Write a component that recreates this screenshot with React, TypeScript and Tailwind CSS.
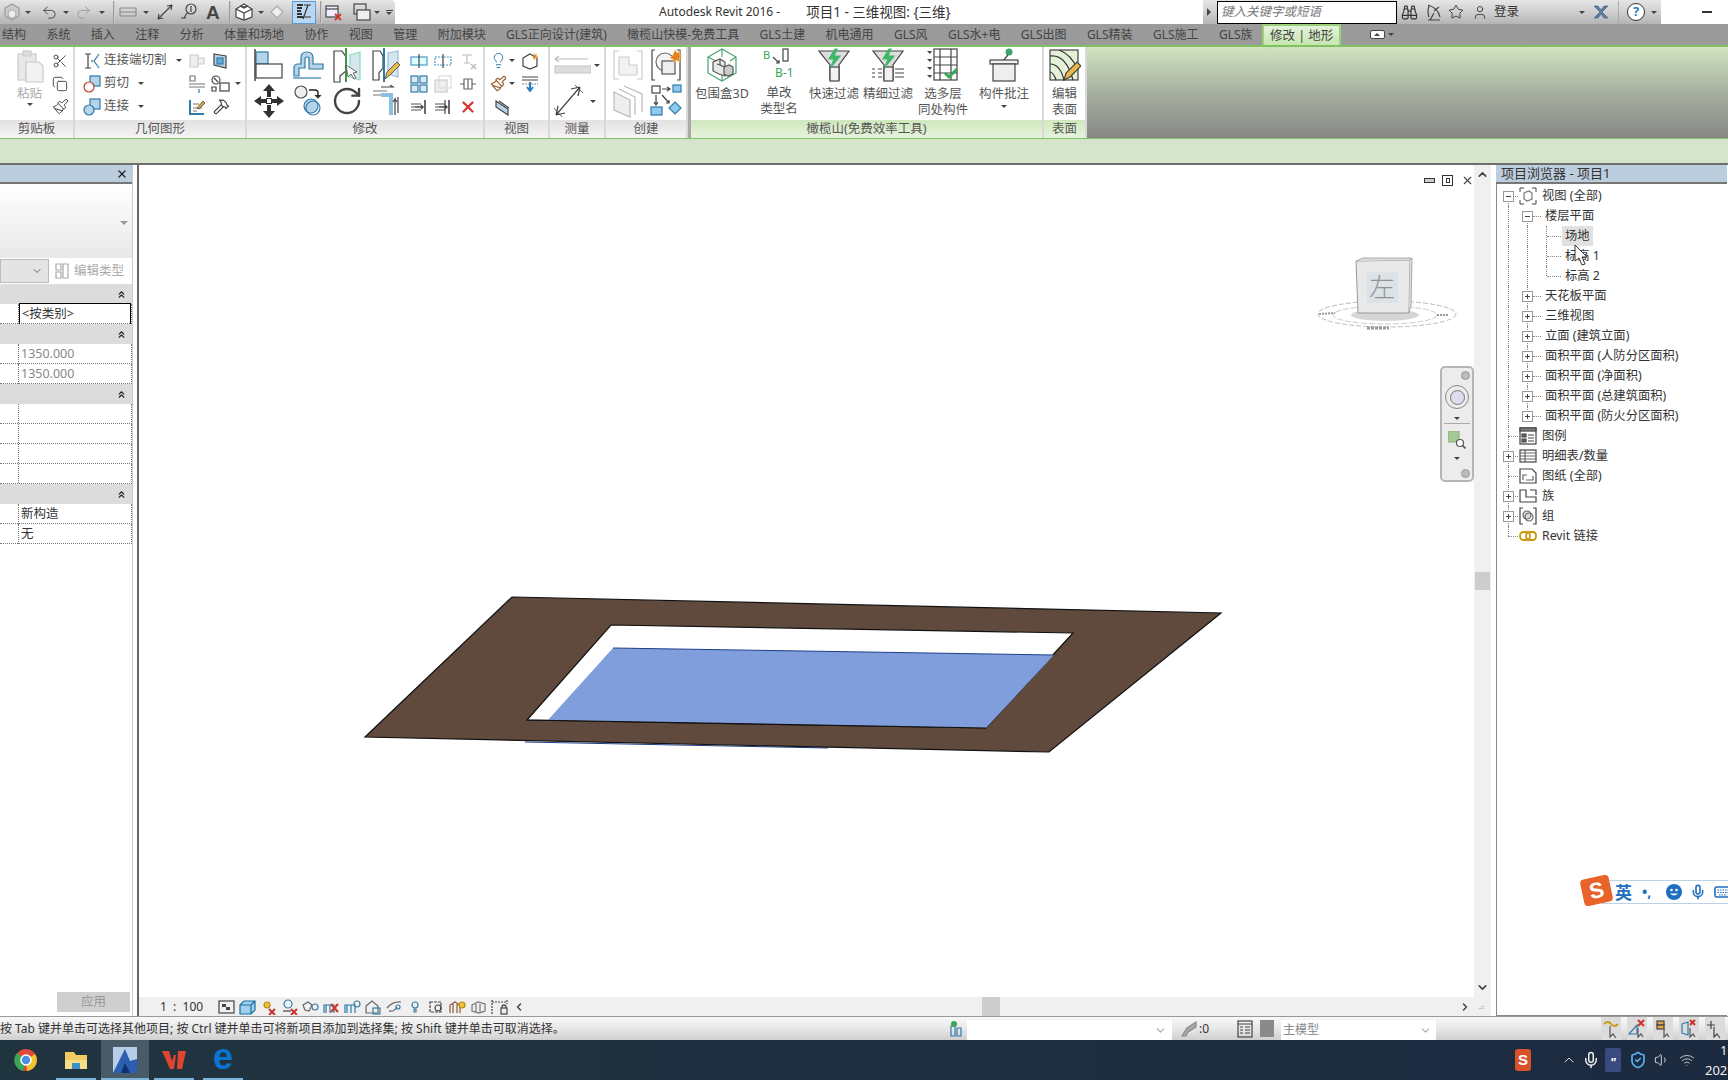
import React from 'react';
import { Undo2, Redo2, Scissors, Copy, Lightbulb, RotateCw, X, Binoculars, Star, User, Hammer, Paintbrush, ChevronLeft, ChevronRight, ChevronUp, ChevronDown, ChevronsUp, Mic, Wifi, Volume1, ShieldCheck } from 'lucide-react';

// small helpers
const Caret = () => <span className="inline-block w-0 h-0 border-x-[3px] border-x-transparent border-t-[3px] border-t-[#444]" />;
const Sep = () => <span className="block w-[2px] h-[22px] bg-[#9a9a9a] border-r border-white/50" />;

const S = ({ w = 24, h = 24, v, children }: { w?: number; h?: number; v?: string; children: React.ReactNode }) => (
  <svg width={w} height={h} viewBox={v || `0 0 ${w} ${h}`} fill="none" stroke="#444" strokeWidth="1.2">{children}</svg>
);

const blue = '#b5d4ea';
const edge = '#2f7ba8';

// ---- ribbon drawings ----
const Clipboard = () => (
  <S w={28} h={34}><rect x="2" y="4" width="18" height="26" fill="#e8e8e8" stroke="#ccc" /><rect x="7" y="1" width="8" height="5" fill="#ddd" stroke="#ccc" /><path d="M10 12h13l4 4v16H10z" fill="#f2f2f2" stroke="#c8c8c8" /></S>
);
const TrimEnd = () => (
  <S w={18} h={18}><path d="M2 2h6M5 2v14M2 16h6" /><path d="M16 2l-5 7 5 7" stroke="#2f7ba8" /><path d="M8 9h3" strokeDasharray="2 1" /></S>
);
const CutGeo = () => (
  <S w={18} h={18}><rect x="7" y="1" width="10" height="10" fill={blue} stroke={edge} /><circle cx="6" cy="12" r="5" fill="#fff" stroke="#c0392b" /></S>
);
const JoinGeo = () => (
  <S w={18} h={18}><rect x="7" y="1" width="10" height="10" fill={blue} stroke={edge} /><circle cx="6" cy="12" r="5" fill={blue} stroke={edge} /></S>
);
const FaintBox = () => (
  <S w={18} h={18}><path d="M2 3h8v12H2zM10 6h6v6h-6z" fill="#eee" stroke="#ccc" /></S>
);
const WallOpen = () => (
  <S w={18} h={18}><path d="M2 2l12 2v12L2 13z" fill={blue} stroke="#444" /><rect x="5" y="6" width="6" height="6" fill="#6aa9d4" stroke={edge} /></S>
);
const Splits = () => (
  <S w={20} h={20}><path d="M3 2h5v5H3zM2 10h16M2 13h16" stroke="#777" /><path d="M12 15v4" stroke={edge} /></S>
);
const Shapes = () => (
  <S w={22} h={18}><circle cx="6" cy="5" r="4" /><path d="M4 3l4 4M2 12h4v4H2z" /><rect x="10" y="8" width="9" height="8" /></S>
);
const Coping = () => (
  <S w={18} h={18}><path d="M2 2v14h14" stroke={edge} strokeWidth="2" /><path d="M5 6h6M5 10h9M5 13h4" stroke="#777" /><path d="M9 10l6-7 2 2-6 6z" fill="#e5a23c" stroke="#444" strokeWidth=".8" /></S>
);
const AlignIcon = () => (
  <S w={30} h={36}><rect x="2" y="5" width="12" height="12" fill={blue} stroke={edge} /><rect x="2" y="17" width="26" height="14" fill="#fff" stroke="#444" /><path d="M1 2v32" strokeWidth="1.5" /></S>
);
const OffsetIcon = () => (
  <S w={32} h={30}><path d="M2 26V18q0-4 4-4h3V8q0-6 6-6t6 6v6h10v5H17V9q0-2-2-2t-2 2v9H7v8z" fill={blue} stroke={edge} /><path d="M1 28h28" stroke={edge} /></S>
);
const MirrorPick = () => (
  <S w={30} h={36}><path d="M2 4h8l4 6v14l-6 5v6H2z" fill="#fff" /><path d="M14 1v34" stroke="#3a9a46" strokeWidth="2" /><path d="M18 8l10-3v28l-10-3z" fill="#d5e6ef" stroke="#8db" /><path d="M14 18l2 12 3-3 3 5 2-1-3-5 4-1z" fill="#fff" stroke="#444" strokeWidth=".8" /></S>
);
const MirrorDraw = () => (
  <S w={30} h={36}><path d="M2 4h7l3 5v12l-4 5v7H2z" fill="#fff" /><path d="M13 1v34" stroke="#2f7ba8" strokeWidth="2" /><path d="M17 6l10-2v26l-10-3z" fill="#d5e6ef" stroke="#9bd" /><path d="M14 32l2-7 10-10 3 3-10 10z" fill="#e8b84a" stroke="#444" strokeWidth=".8" /></S>
);
const MoveIcon = () => (
  <svg width="30" height="34" viewBox="0 0 30 34" fill="#333"><path d="M15 0l6 7h-4v6h-4V7H9zM15 34l-6-7h4v-6h4v6h4zM0 17l7-5v3h5v4H7v3zM30 17l-7 5v-3h-5v-4h5v-3z" /><rect x="12.5" y="14.5" width="5" height="5" fill="#fff" stroke="#333" /></svg>
);
const CopyMove = () => (
  <S w={28} h={32}><circle cx="7" cy="7" r="6" fill="#eee" stroke="#555" /><path d="M15 5h6q3 0 3 3v3" strokeWidth="1.4" stroke="#222" /><path d="M21 10l3 3 3-3" fill="#222" /><circle cx="17" cy="21" r="7" fill={blue} stroke={edge} /><circle cx="19" cy="23" r="7" stroke={edge} /></S>
);
const TrimIcon = () => (
  <S w={30} h={32}><path d="M2 6h14M2 10h14" stroke="#777" /><path d="M10 10h10v20" stroke="#8cc0e0" strokeWidth="4" /><path d="M24 30V14l-2 3m2-3l2 3M10 2h12l-3-2" /><path d="M27 28V12" /></S>
);
const SplitSmall = ({ dot }: { dot?: boolean }) => (
  <S w={20} h={14}><rect x="2" y="3" width="16" height="8" stroke="#4a9cc9" strokeDasharray={dot ? '2 1' : undefined} fill={dot ? 'none' : '#dff'} /><path d="M10 0v14" stroke="#444" /></S>
);
const FaintPin = () => (
  <S w={18} h={18}><path d="M3 3h10M8 3v8M5 11h6" stroke="#bbb" /><path d="M12 12l5 5m0-5l-5 5" stroke="#bbb" strokeWidth="1.5" /></S>
);
const Array4 = () => (
  <S w={18} h={18}>{[1, 10].map(x => [1, 10].map(y => <rect key={x + '-' + y} x={x} y={y} width="7" height="7" fill="#d7ebf6" stroke={edge} />))}</S>
);
const Scale = () => (
  <S w={18} h={18}><rect x="1" y="5" width="12" height="12" fill="#eee" stroke="#ccc" /><rect x="5" y="1" width="12" height="12" stroke="#ddd" /></S>
);
const Pin = () => (
  <S w={18} h={14}><path d="M1 7h4M13 7h4M5 2h8v10H5zM9 2v10" stroke="#666" /></S>
);
const Lines = ({ n = 2 }: { n?: number }) => (
  <S w={18} h={16}><path d="M15 1v14" strokeWidth="1.6" />{n > 2 && <path d="M11 1v14" strokeWidth="1.2" />}<path d="M1 5h10M1 8h11M1 11h10" stroke="#555" /><path d="M5 8h8l-2-2m2 2l-2 2" /></S>
);
const EditCut = () => (
  <S w={20} h={16}><path d="M2 1h16M2 4h16" stroke="#444" /><path d="M2 8h16" strokeDasharray="2 1" stroke="#888" /><path d="M10 6v8m-3-3l3 4 3-4" stroke="#2a7fc1" strokeWidth="2" /></S>
);
const Section = () => (
  <S w={18} h={18}><path d="M2 3l12 8v6L2 9z" fill={blue} stroke="#444" /><path d="M5 3l10 7" stroke="#444" /></S>
);
const Dim = () => (
  <S w={38} h={22}><path d="M2 5h33M2 5l4-3M2 5l4 3" stroke="#bbb" /><rect x="2" y="12" width="36" height="7" fill="#ddd" stroke="#ccc" /></S>
);
const DimD = () => (
  <S w={30} h={34}><path d="M3 31L27 3M3 31l2-9M3 31l9-2M27 3l-2 9M27 3l-9 2" strokeWidth="1.2" /><path d="M1 24l8 9M22 1l8 8" strokeWidth=".8" /></S>
);
const CompBox = () => (
  <S w={32} h={32}><path d="M2 2h5M2 2v28h5M30 2h-5M30 2v28h-5" stroke="#ccc" /><path d="M7 8h10v8h8v10H7z" fill="#f2f2f2" stroke="#ccc" /></S>
);
const InPlace = () => (
  <S w={32} h={34}><path d="M5 2H2v30h3M27 2h3v30h-3" strokeWidth="1.2" /><circle cx="15" cy="14" r="9" stroke="#666" fill="#f5f5f5" /><rect x="12" y="13" width="13" height="13" fill="#eee" stroke="#555" /><path d="M25 2l2 3 3-2-1 4 3 1-3 2 1 4-4-2-2 3-1-4-3-1 3-3z" fill="#e67e22" stroke="#e9c46a" strokeWidth=".8" /></S>
);
const Stack = () => (
  <S w={30} h={34}><path d="M1 8l16 8v17L1 26z" fill="#eee" stroke="#bbb" /><path d="M6 5l16 8v18M11 2l18 8v18" stroke="#bbb" /></S>
);
const Diagram = () => (
  <S w={32} h={34}><rect x="2" y="2" width="8" height="7" /><path d="M12 5h7m-2-2l3 2-3 2M6 11v9m-2-2l2 3 2-3M12 11l7 8m-3 0h3v-3" /><rect x="23" y="1" width="8" height="7" fill="#8ec9ee" stroke={edge} /><rect x="1" y="23" width="11" height="8" fill="#8ec9ee" stroke={edge} /><path d="M25 18l6 6-6 6-6-6z" fill="#8ec9ee" stroke={edge} /></S>
);
const BBox3D = () => (
  <S w={32} h={34}><path d="M16 1l14 8v16l-14 8-14-8V9z" stroke="#4aa271" /><path d="M16 1v8M2 9l8 4M30 9l-6 4M16 33v-6" stroke="#4aa271" /><path d="M7 14l7-3 5 3v14l-6-2-6-3z" fill="#e8e8e8" stroke="#555" /><path d="M14 11v6l5 2M11 16l3 1" stroke="#555" /><path d="M18 19l5-2 4 2v7l-5 2-4-2z" fill="#ccc" stroke="#555" /></S>
);
const Funnel = ({ extra }: { extra?: boolean }) => (
  <S w={34} h={34}><path d="M2 3h30L22 17v15h-9V17z" fill="#ddd" stroke="#444" /><rect x="13" y="19" width="9" height="14" fill="#f2f2f2" stroke="#444" /><path d="M18 1l-6 10h5l-3 8 9-11h-6l3-7z" fill="#40b868" stroke="#40b868" />{extra && <path d="M1 21h3M7 21h4M1 25h3M7 25h4M1 29h3M7 29h4M24 21h9M24 25h9M24 29h9" />}</S>
);
const Layers = () => (
  <S w={32} h={34}><rect x="7" y="1" width="23" height="31" /><path d="M7 9h23M7 17h23M7 25h23M13 1v31M24 1v31" />{[3, 11, 19, 27].map(y => <path key={y} d={`M0 ${y}h5l-2 3z`} fill="#444" stroke="none" />)}<path d="M18 25l4 4 8-8" stroke="#3aa65a" strokeWidth="3" /></S>
);
const Podium = () => (
  <S w={32} h={34}><circle cx="21" cy="4" r="3.5" fill="#3fa16a" stroke="none" /><path d="M20 7l-6 7" /><rect x="2" y="12" width="28" height="4" fill="#f2f2f2" /><rect x="5" y="16" width="22" height="17" fill="#eee" /></S>
);
const EditSurf = () => (
  <S w={32} h={34}><rect x="1" y="2" width="28" height="30" fill="#e4f0d8" stroke="#444" /><path d="M1 8q16-2 23 24M1 16q10 0 14 16M1 24q4 1 6 8M10 2q12 4 19 20" stroke="#333" /><path d="M15 32l2-7 11-11 4 4-11 11z" fill="#e8b84a" stroke="#444" /></S>
);

// ---- little rows of the ribbon ----
const Panel = ({ title, w, green, children }: { title: string; w: string; green?: boolean; children: React.ReactNode }) => (
  <div className={`flex flex-col ${w} bg-white border-r-2 border-[#d8d8d8] shrink-0`}>
    <div className="h-[73px] flex">{children}</div>
    <div className={`h-[18px] flex items-center justify-center text-[12.5px] text-[#555] bg-gradient-to-b ${green ? 'from-[#cfe8bd] to-[#e6f3dc]' : 'from-[#e2e2e2] to-[#f4f4f4]'}`}>{title}</div>
  </div>
);

const BigTool = ({ w, icon, lines, caret }: { w: string; icon: React.ReactNode; lines: string[]; caret?: boolean }) => (
  <div className={`${w} flex flex-col items-center shrink-0`}>
    <div className="h-[35px] flex items-end justify-center">{icon}</div>
    <div className="leading-[16px] text-[12.5px] text-[#555] text-center whitespace-nowrap mt-[4px]">
      {lines.map(l => <div key={l}>{l}</div>)}
    </div>
    {caret && <div className="-mt-[3px] leading-[6px]"><Caret /></div>}
  </div>
);

const qatGray = 'bg-gradient-to-b from-[#e6e6e6] via-[#cfcfcf] to-[#b4b4b4]';

const tabs = ['结构', '系统', '插入', '注释', '分析', '体量和场地', '协作', '视图', '管理', '附加模块', 'GLS正向设计(建筑)', '橄榄山快模-免费工具', 'GLS土建', '机电通用', 'GLS风', 'GLS水+电', 'GLS出图', 'GLS精装', 'GLS施工', 'GLS族'];

const QuickBar = () => (
  <div className={`w-[395px] h-[24px] shrink-0 flex items-center ${qatGray} rounded-tr-sm`}>
    <span className="ml-[2px] w-[20px] flex justify-center">
      <S w={18} h={18}><path d="M9 1l7 4v8l-7 4-7-4V5z" fill="#ccc" stroke="#999" /><circle cx="9" cy="11" r="4" fill="#eee" stroke="#aaa" /></S>
    </span>
    <span className="ml-[3px] flex"><Caret /></span>
    <Undo2 className="ml-[10px] w-[17px] h-[17px] text-[#444]" strokeWidth={1.3} />
    <span className="ml-[5px] flex"><Caret /></span>
    <Redo2 className="ml-[6px] w-[17px] h-[17px] text-[#999]" strokeWidth={1.3} />
    <span className="ml-[7px] flex"><Caret /></span>
    <span className="ml-[8px] mr-[4px]"><Sep /></span>
    <S w={18} h={16}><path d="M1 4h16M1 8h16M1 12h16" stroke="#8a8a8a" /><path d="M1 4v8M17 4v8" stroke="#8a8a8a" /></S>
    <span className="ml-[6px] flex"><Caret /></span>
    <span className="ml-[7px] flex"><S w={18} h={18}><path d="M2 16L16 2M2 16l1-5M2 16l5-1M16 2l-5 1M16 2l-1 5" /></S></span>
    <span className="ml-[6px] flex"><S w={18} h={18}><circle cx="11" cy="6" r="5" /><path d="M4 15l3-5M1 15h5M11 3v6" /></S></span>
    <span className="ml-[8px] text-[19px] leading-none font-bold text-[#444] font-['Liberation_Sans',sans-serif]">A</span>
    <span className="ml-[9px] mr-[4px]"><Sep /></span>
    <S w={18} h={18}><path d="M9 1l8 5v8l-8 3-8-3V6z" fill="#fff" /><path d="M1 6l8 4 8-4M9 10v7" /><path d="M5 3l4 2 4-2" fill="#666" /></S>
    <span className="ml-[5px] flex"><Caret /></span>
    <span className="ml-[6px] flex"><S w={14} h={14}><path d="M7 1l6 6-6 6-6-6z" stroke="#aaa" fill="#eee" /></S></span>
    <span className="ml-[8px] w-[24px] h-[23px] flex items-center justify-center bg-[#b9d7f1] border border-[#5e9bd0]">
      <S w={18} h={18}><path d="M2 2h6M2 5h5M2 8h4M2 11h5M2 14h6" strokeWidth="2" stroke="#333" /><path d="M9 2h7M9 14h7M8 16l5-14" stroke="#333" /></S>
    </span>
    <span className="ml-[4px] mr-[3px]"><Sep /></span>
    <S w={18} h={18}><rect x="1" y="3" width="12" height="11" fill="#eef" /><path d="M1 6h12" /><path d="M10 11l6 6m0-6l-6 6" stroke="#d0342c" strokeWidth="1.8" /></S>
    <span className="ml-[10px] flex"><S w={18} h={18}><rect x="1" y="1" width="12" height="10" /><rect x="4" y="7" width="13" height="10" fill="#eee" /></S></span>
    <span className="ml-[3px] flex"><Caret /></span>
    <span className="ml-[6px] flex flex-col items-center gap-[1px]"><span className="w-[7px] h-[1px] bg-[#444]" /><Caret /></span>
  </div>
);

const SearchBar = () => (
  <div className={`ml-auto mr-[67px] w-[458px] h-[24px] flex items-center ${qatGray}`}>
    <span className="ml-[4px] w-0 h-0 border-y-[4px] border-y-transparent border-l-[4px] border-l-[#444]" />
    <div className="ml-[6px] w-[180px] h-[23px] bg-white border-[1.5px] border-black flex items-center pl-[3px] italic text-[12.5px] text-[#777]">键入关键字或短语</div>
    <Binoculars className="ml-[4px] w-[17px] h-[17px] text-[#333]" strokeWidth={1.6} />
    <span className="ml-[8px] flex"><S w={16} h={18}><path d="M2 2q10 3 12 12M3 14q-2-6 0-11" /><path d="M8 8l5-4M2 17h12M8 10l-4 7" /></S></span>
    <Star className="ml-[6px] w-[16px] h-[16px] text-[#333]" strokeWidth={1.4} />
    <User className="ml-[8px] w-[16px] h-[17px] text-[#333]" strokeWidth={1.3} />
    <span className="ml-[6px] text-[12.5px] text-[#333]">登录</span>
    <span className="ml-[60px] flex"><Caret /></span>
    <span className="ml-[8px] flex"><S w={16} h={16}><path d="M1 2l6 6-6 6h4l3-4 3 4h4l-6-6 6-6h-4L8 6 5 2z" fill="#5d7da0" stroke="#39587d" strokeWidth=".6" /></S></span>
    <span className="ml-[9px] w-px h-[22px] bg-[#aaa]" />
    <span className="ml-[8px] w-[18px] h-[18px] rounded-full border-[1.5px] border-[#333] bg-white flex items-center justify-center text-[13px] font-bold text-[#2a7fc1]">?</span>
    <span className="ml-[6px] flex"><Caret /></span>
  </div>
);

const Ribbon = () => (
  <div className="h-[94px] flex border-t-2 border-b border-[#82c161] bg-gradient-to-b from-[#d0e4c0] via-[#a6b09f] to-[#878787]">
    {/* 剪贴板 */}
    <Panel title="剪贴板" w="w-[75px]">
      <div className="w-[48px] pl-[11px] pt-[3px] flex flex-col items-center">
        <Clipboard />
        <div className="text-[12.5px] text-[#aaa] mt-[1px] leading-[18px]">粘贴</div>
        <Caret />
      </div>
      <div className="grid auto-rows-[23px] place-items-center pt-[2px] w-[24px]">
        <Scissors className="w-[16px] h-[16px] text-[#444]" strokeWidth={1.4} />
        <Copy className="w-[16px] h-[16px] text-[#444]" strokeWidth={1.4} />
        <Paintbrush className="w-[17px] h-[17px] text-[#444]" strokeWidth={1.4} />
      </div>
    </Panel>

    {/* 几何图形 */}
    <Panel title="几何图形" w="w-[172px]">
      <div className="w-[110px] pl-[8px] pt-[2px] flex flex-col text-[12.5px] text-[#555]">
        <div className="h-[23px] flex items-center gap-[3px] whitespace-nowrap"><TrimEnd />连接端切割<span className="ml-[6px] flex"><Caret /></span></div>
        <div className="h-[23px] flex items-center gap-[3px] whitespace-nowrap"><CutGeo />剪切<span className="ml-[6px] flex"><Caret /></span></div>
        <div className="h-[23px] flex items-center gap-[3px] whitespace-nowrap"><JoinGeo />连接<span className="ml-[6px] flex"><Caret /></span></div>
      </div>
      <div className="grid grid-cols-[24px_24px_10px] auto-rows-[23px] place-items-center pt-[2px]">
        <FaintBox /><WallOpen /><span />
        <Splits /><Shapes /><Caret />
        <Coping /><Hammer className="w-[17px] h-[17px] text-[#444]" strokeWidth={1.6} /><span />
      </div>
    </Panel>

    {/* 修改 */}
    <Panel title="修改" w="w-[238px]">
      <div className="grid grid-cols-[39px_39px_39px_39px] grid-rows-[36px_36px] place-items-center pl-[2px] w-[160px]">
        <AlignIcon /><OffsetIcon /><MirrorPick /><MirrorDraw />
        <MoveIcon /><CopyMove /><RotateCw className="w-[32px] h-[32px] text-[#444]" strokeWidth={1.8} /><TrimIcon />
      </div>
      <div className="grid grid-cols-[24px_24px_26px] auto-rows-[23px] place-items-center pt-[2px]">
        <SplitSmall /><SplitSmall dot /><FaintPin />
        <Array4 /><Scale /><Pin />
        <Lines /><Lines n={3} /><X className="w-[18px] h-[18px] text-[#d63a32]" strokeWidth={3} />
      </div>
    </Panel>

    {/* 视图 */}
    <Panel title="视图" w="w-[65px]">
      <div className="grid grid-cols-[29px_26px] auto-rows-[23px] pl-[3px] pt-[2px] place-items-center">
        <span className="flex items-center gap-[2px]"><Lightbulb className="w-[17px] h-[17px] text-[#2f7ba8]" strokeWidth={1.4} /><Caret /></span>
        <S w={18} h={18}><path d="M2 6l7-4 7 4v8l-7 3-7-3z" /><path d="M13 1l1 2 2-1-1 2 2 1-3 1 0 2-2-2" fill="#e67e22" stroke="#e9c46a" strokeWidth=".6" /></S>
        <span className="flex items-center gap-[2px]"><Paintbrush className="w-[17px] h-[17px] text-[#9a5b28]" strokeWidth={1.6} /><Caret /></span>
        <EditCut />
        <Section /><span />
      </div>
    </Panel>

    {/* 测量 */}
    <Panel title="测量" w="w-[56px]">
      <div className="flex flex-col pl-[3px] w-full">
        <div className="h-[36px] flex items-center justify-start gap-[3px]"><Dim /><Caret /></div>
        <div className="h-[36px] flex items-center gap-[7px]"><DimD /><Caret /></div>
      </div>
    </Panel>

    {/* 创建 */}
    <Panel title="创建" w="w-[82px]">
      <div className="grid grid-cols-[38px_38px] grid-rows-[36px_36px] place-items-center pl-[3px]">
        <CompBox /><InPlace />
        <Stack /><Diagram />
      </div>
    </Panel>

    <div className="w-[3px] bg-[#aaa] shrink-0" />

    {/* 橄榄山 */}
    <Panel title="橄榄山(免费效率工具)" w="w-[353px]" green>
      <div className="flex pl-[2px]">
        <BigTool w="w-[58px]" icon={<BBox3D />} lines={['包围盒3D']} />
        <BigTool w="w-[56px]" icon={<S w={32} h={34}><path d="M2 4h0" /><text x="0" y="12" fontSize="11" fill="#3aa65a" stroke="none">B</text><rect x="20" y="2" width="5" height="12" /><path d="M10 10l6 6m0-3v3h-3" /><text x="12" y="30" fontSize="12" fill="#3aa65a" stroke="none">B-1</text></S>} lines={['单改', '类型名']} caret />
        <BigTool w="w-[54px]" icon={<Funnel />} lines={['快速过滤']} />
        <BigTool w="w-[54px]" icon={<Funnel extra />} lines={['精细过滤']} />
        <BigTool w="w-[56px]" icon={<Layers />} lines={['选多层', '同处构件']} />
        <BigTool w="w-[66px]" icon={<Podium />} lines={['构件批注']} caret />
      </div>
    </Panel>

    {/* 表面 */}
    <Panel title="表面" w="w-[43px]" green>
      <BigTool w="w-full" icon={<EditSurf />} lines={['编辑', '表面']} />
    </Panel>
  </div>
);

// ---- properties panel ----
const SecHead = () => (
  <div className="h-[20px] bg-[#dcdcdc] flex items-center justify-end pr-[5px]">
    <ChevronsUp className="w-[11px] h-[11px] text-[#222]" strokeWidth={2.5} />
  </div>
);
const PropRow = ({ children, box, faint }: { children?: React.ReactNode; box?: boolean; faint?: boolean }) => (
  <div className="h-[20px] grid grid-cols-[19px_1fr] border-b border-dotted border-[#777] border-r">
    <div className="border-r border-dotted border-[#777]" />
    <div className={`flex items-center pl-[2px] pt-[1px] text-[12.5px] ${faint ? 'text-[#888]' : 'text-[#333]'} ${box ? 'border-[1.5px] border-black -my-[1px]' : ''}`}>{children}</div>
  </div>
);

const PropsPanel = () => (
  <div className="w-[133px] shrink-0 flex flex-col bg-white border-r border-[#ccc]">
    <div className="h-[19px] bg-[#bccddd] flex items-center justify-end pr-[4px] border-b-2 border-[#777]">
      <X className="w-[12px] h-[12px] text-[#222]" strokeWidth={2.6} />
    </div>
    <div className="h-[74px] bg-gradient-to-b from-white to-[#e8e8e8] flex items-center justify-end pr-[4px] pt-[4px]">
      <span className="w-0 h-0 border-x-[4px] border-x-transparent border-t-[4px] border-t-[#999]" />
    </div>
    <div className="h-[26px] flex items-center">
      <div className="w-[49px] h-[24px] border border-[#bbb] bg-[#e4e4e4] flex items-center justify-end pr-[5px]"><ChevronDown className="w-[12px] h-[12px] text-[#666]" /></div>
      <span className="ml-[6px] flex"><S w={14} h={16}><path d="M1 1h5v6H1zM8 1h5v14H8zM1 9h5v6H1z" stroke="#aaa" /></S></span>
      <span className="ml-[5px] text-[12.5px] text-[#aaa] whitespace-nowrap">编辑类型</span>
    </div>
    <SecHead />
    <PropRow box>&lt;按类别&gt;</PropRow>
    <SecHead />
    <PropRow faint>1350.000</PropRow>
    <PropRow faint>1350.000</PropRow>
    <SecHead />
    <PropRow /><PropRow /><PropRow /><PropRow />
    <SecHead />
    <PropRow>新构造</PropRow>
    <PropRow>无</PropRow>
    <div className="flex-1" />
    <div className="h-[24px] pl-[57px] pb-[3px]">
      <div className="w-[73px] h-[20px] bg-[#cfcfcf] flex items-center justify-center text-[12.5px] text-[#999]">应用</div>
    </div>
  </div>
);

// ---- 3D view bits ----
const Model = () => (
  <svg className="absolute left-0 top-0" width="1340" height="830" viewBox="139 165 1340 830" fill="none">
    <path d="M525 742L828 748" stroke="#1d3f8a" strokeWidth="1" />
    <path d="M512 597L1221 613L1049 752L365 737Z" fill="#604a3d" stroke="#111" strokeWidth="1.2" />
    <path d="M611 625L1073 633L986 728L527 720Z" fill="#fff" stroke="#111" strokeWidth="1.2" />
    <path d="M613 648L1054 655L986 728L548 720Z" fill="#7f9edb" />
    <path d="M613 648L1054 655" stroke="#1d3f8a" strokeWidth="1" />
    <path d="M527 720L986 728" stroke="#111" strokeWidth="1.2" />
  </svg>
);

const ViewCube = () => (
  <svg className="absolute left-[1178px] top-[90px]" width="146" height="84" viewBox="0 0 146 84" fill="none">
    <ellipse cx="70" cy="59" rx="69" ry="13" stroke="#bbb" strokeDasharray="5 2" />
    <ellipse cx="68" cy="60" rx="52" ry="9" stroke="#ccc" strokeDasharray="6 2" />
    <ellipse cx="68" cy="60" rx="34" ry="6" fill="#bbb" opacity=".6" />
    <path d="M39 6L93 5L92 58H41Z" fill="#e9e9e9" stroke="#999" />
    <path d="M39 6L46 3H94L93 5M93 5L95 3L94 50L92 58" fill="#ddd" stroke="#aaa" />
    <rect x="50" y="17" width="31" height="31" fill="#dde2e6" />
    <text x="52" y="42" fontSize="26" fontWeight="300" fill="#8f9396" fontFamily="'Noto Sans CJK SC'">左</text>
    <path d="M2 59l16-1M120 60h12" stroke="#999" strokeWidth="2" strokeDasharray="2 1" />
    <path d="M50 73h22" stroke="#999" strokeWidth="3" strokeDasharray="3 1" />
  </svg>
);

const NavBar = () => (
  <div className="absolute left-[1301px] top-[201px] w-[34px] h-[116px] rounded-[5px] border-2 border-[#b5b5b5] bg-[#ececec] flex flex-col items-center pt-[3px]">
    <span className="self-end mr-[2px] w-[9px] h-[9px] rounded-full bg-[#bbb] border border-[#999]" />
    <div className="mt-[5px] w-[24px] h-[24px] rounded-full border border-[#888] flex items-center justify-center"><span className="w-[15px] h-[15px] rounded-full border border-[#777] bg-[#dde]" /></div>
    <span className="mt-[8px] leading-[6px] flex"><Caret /></span>
    <span className="mt-[3px] w-[26px] h-px bg-[#aaa]" />
    <div className="mt-[7px] flex"><S w={18} h={18}><rect x="0" y="0" width="11" height="11" fill="#a5c994" stroke="#8fb67e" /><circle cx="12" cy="12" r="3.5" stroke="#555" fill="#fff" /><path d="M14.5 14.5l3 3" stroke="#555" strokeWidth="1.6" /></S></div>
    <span className="mt-[8px] leading-[6px] flex"><Caret /></span>
    <span className="mt-auto mb-[2px] self-end mr-[2px] w-[9px] h-[9px] rounded-full bg-[#bbb] border border-[#999]" />
  </div>
);

const vcIcons = [
  <S key="0" w={17} h={14}><rect x="1" y="1" width="15" height="12" /><path d="M4 4h4v3H4zM8 7h4v3H8z" fill="#444" stroke="none" /></S>,
  <S key="1" w={17} h={16}><path d="M1 6l4-4h11v9l-4 4H1zM1 6h11v9M12 6l4-4" fill="#9fd0ee" stroke="#1f6f9f" /></S>,
  <S key="2" w={17} h={16}><circle cx="7" cy="6" r="3" fill="#f0c040" stroke="#b88a10" /><path d="M9 10l6 6m0-6l-6 6" stroke="#c9342c" strokeWidth="2" /></S>,
  <S key="3" w={17} h={16}><circle cx="7" cy="5" r="4" stroke="#3a7ca5" /><path d="M2 12h8" /><path d="M10 10l6 6m0-6l-6 6" stroke="#c9342c" strokeWidth="2" /></S>,
  <S key="4" w={17} h={16}><path d="M1 6l5-3 4 3-3 6-4-1z" stroke="#666" /><circle cx="13" cy="8" r="3" stroke="#3a7ca5" /></S>,
  <S key="5" w={17} h={16}><path d="M1 14V6h10v8M3 6v8M7 6v8" stroke="#2f7ba8" /><path d="M8 5l7 8m0-8l-7 8" stroke="#c9342c" strokeWidth="2" /></S>,
  <S key="6" w={17} h={16}><path d="M1 14V6h10v8M3 6v8M7 6v8" stroke="#2f7ba8" /><circle cx="13" cy="5" r="3" stroke="#3a7ca5" /></S>,
  <S key="7" w={17} h={16}><path d="M1 7l6-5 6 5v7H1z" stroke="#666" /><rect x="8" y="9" width="7" height="6" stroke="#3a7ca5" /></S>,
  <S key="8" w={17} h={16}><path d="M1 9q6-7 14-6M3 12q5 1 8-4" stroke="#666" /><circle cx="12" cy="8" r="2" stroke="#3a7ca5" /></S>,
  <S key="9" w={17} h={16}><circle cx="8" cy="6" r="3" stroke="#3a7ca5" /><path d="M7 10h2v3H7z" stroke="#3a7ca5" /></S>,
  <S key="10" w={17} h={16}><rect x="2" y="3" width="11" height="10" strokeDasharray="3 1" /><circle cx="10" cy="9" r="3" /></S>,
  <S key="11" w={17} h={16}><path d="M1 14V6l5-3 5 3v8M4 5v9M8 5v9" stroke="#8a5a3a" /><circle cx="13" cy="6" r="3" fill="#f0c040" stroke="#b88a10" /></S>,
  <S key="12" w={17} h={16}><path d="M2 6l6-3 7 2v7l-6 2-7-2z" stroke="#777" /><path d="M6 5v8M10 5v8" stroke="#777" /></S>,
  <S key="13" w={17} h={18}><path d="M1 2v14M16 2v4M1 4h15" strokeDasharray="2 1" /><rect x="10" y="10" width="6" height="6" /><path d="M11 10V8q2-2 4 0v2" /></S>,
];

const ViewBar = () => (
  <div className="h-[19px] flex items-center bg-[#f0f0f0] relative text-[#333]">
    <span className="ml-[21px] w-[55px] text-[12px] whitespace-pre">1  :  100</span>
    <div className="ml-[3px] flex items-center gap-[4px]">{vcIcons}</div>
    <ChevronLeft className="ml-[5px] w-[12px] h-[12px] text-[#444]" strokeWidth={3} />
    <div className="ml-[457px] w-[18px] h-[19px] bg-[#cdcdcd]" />
    <ChevronRight className="ml-[459px] w-[12px] h-[12px] text-[#444]" strokeWidth={3} />
    <span className="ml-[7px] text-[9px] text-[#aaa] leading-none">⠴</span>
  </div>
);

// ---- project browser ----
type Slot = 'none' | 'line' | 'end' | 'minus' | 'plus' | 'plusEnd' | 'first';
const Box = ({ minus }: { minus?: boolean }) => (
  <svg width="11" height="11" viewBox="0 0 11 11" className="relative z-10" fill="#fff" stroke="#999"><rect x=".5" y=".5" width="10" height="10" /><path d="M3 5.5h5" stroke="#444" />{!minus && <path d="M5.5 3v5" stroke="#444" />}</svg>
);
const TreeSlot = ({ k, dash }: { k: Slot; dash?: boolean }) => (
  <div className="w-[19px] h-[20px] shrink-0 relative flex items-center justify-center">
    {(k === 'line' || k === 'plus') && <span className="absolute left-[9px] inset-y-0 border-l border-dotted border-[#888]" />}
    {(k === 'first' || k === 'minus') && <span className="absolute left-[9px] top-[10px] bottom-0 border-l border-dotted border-[#888]" />}
    {(k === 'end' || k === 'plusEnd') && <span className="absolute left-[9px] top-0 h-[10px] border-l border-dotted border-[#888]" />}
    {dash && <span className="absolute left-[9px] right-0 top-[10px] border-t border-dotted border-[#888]" />}
    {k === 'minus' && <Box minus />}
    {(k === 'plus' || k === 'plusEnd') && <Box />}
  </div>
);
const Dash = ({ w }: { w: string }) => <span className={`${w} shrink-0 border-t border-dotted border-[#888]`} />;

const tIcon = {
  view: <S w={18} h={18}><path d="M1 5V1h4M13 1h4v4M1 13v4h4M13 17h4v-4" strokeWidth="1" /><path d="M5 6l5-2 3 2v6l-5 2-3-2z" stroke="#777" /></S>,
  legend: <S w={18} h={18}><rect x="1" y="1" width="16" height="16" /><rect x="1" y="1" width="16" height="3" fill="#888" /><path d="M3 7h4v3H3zM3 12h4v3H3zM9 8h6M9 11h6M9 14h6" fill="#666" /></S>,
  table: <S w={18} h={14}><rect x="1" y="1" width="16" height="12" /><path d="M1 4h16M1 7h16M1 10h16M6 1v12" stroke="#666" /></S>,
  sheet: <S w={18} h={16}><path d="M1 1h12l4 4v10H1z" /><path d="M4 12V7h4M7 12h7V8" stroke="#666" /></S>,
  fam: <S w={18} h={16}><path d="M1 14V2h6v7h10v5zM11 2h6v5" /></S>,
  group: <S w={18} h={18}><path d="M4 1H1v16h3M14 1h3v16h-3" /><circle cx="8" cy="8" r="4" fill="#ddd" stroke="#666" /><circle cx="10" cy="10" r="4" stroke="#666" /></S>,
  link: <S w={18} h={10}><path d="M1 5q0-4 4-4h3q3 0 3 4t-3 4H5q-4 0-4-4zM7 5q0-4 4-4h3q3 0 3 4t-3 4h-3q-4 0-4-4z" stroke="#c99a10" strokeWidth="1.8" /></S>,
};

const TreeRow = ({ a, b, c, icon, label, hl }: { a: Slot; b?: Slot; c?: Slot; icon?: React.ReactNode; label: string; hl?: boolean }) => (
  <div className="h-[20px] flex items-center text-[12.3px] text-[#333] whitespace-nowrap">
    <TreeSlot k={a} dash={!!icon} />
    {icon ? (
      <>
        <span className="w-[19px] shrink-0 flex justify-center relative">{icon}</span>
        <span className="ml-[5px]">{label}</span>
      </>
    ) : (
      <>
        <TreeSlot k={b || 'none'} />
        {c ? (
          <>
            <TreeSlot k={c} />
            <Dash w="-ml-[9px] w-[14px]" />
            <span className={hl ? 'ml-[1px] px-[3px] bg-[#e0e0e0] h-[20px] leading-[20px]' : 'ml-[4px]'}>{label}</span>
          </>
        ) : (
          <>
            <Dash w="-ml-[4px] w-[8px]" />
            <span className="ml-[4px]">{label}</span>
          </>
        )}
      </>
    )}
  </div>
);

const ProjectBrowser = () => (
  <div className="w-[231px] ml-[5px] shrink-0 flex flex-col bg-white relative">
    <div className="h-[19px] bg-[#bccddd] flex items-center pl-[5px] text-[13px] text-[#333] border-b-2 border-[#777] whitespace-nowrap">项目浏览器 - 项目1</div>
    <div className="flex-1 pt-[2px] pl-[2px] border-l border-[#888] border-b">
      <TreeRow a="minus" icon={tIcon.view} label="视图 (全部)" />
      <TreeRow a="line" b="minus" label="楼层平面" />
      <TreeRow a="line" b="line" c="line" label="场地" hl />
      <TreeRow a="line" b="line" c="line" label="标高 1" />
      <TreeRow a="line" b="line" c="end" label="标高 2" />
      {['天花板平面', '三维视图', '立面 (建筑立面)', '面积平面 (人防分区面积)', '面积平面 (净面积)', '面积平面 (总建筑面积)'].map(t => (
        <TreeRow key={t} a="line" b="plus" label={t} />
      ))}
      <TreeRow a="line" b="plusEnd" label="面积平面 (防火分区面积)" />
      <TreeRow a="line" icon={tIcon.legend} label="图例" />
      <TreeRow a="plus" icon={tIcon.table} label="明细表/数量" />
      <TreeRow a="line" icon={tIcon.sheet} label="图纸 (全部)" />
      <TreeRow a="plus" icon={tIcon.fam} label="族" />
      <TreeRow a="plus" icon={tIcon.group} label="组" />
      <TreeRow a="end" icon={tIcon.link} label="Revit 链接" />
    </div>
    {/* mouse pointer over the tree */}
    <svg className="absolute left-[78px] top-[79px]" width="16" height="22" viewBox="0 0 16 22"><path d="M1 1v16l4-3 3 7 3-1-3-7h5z" fill="#fff" stroke="#333" /></svg>
  </div>
);

// ---- sogou input bar ----
const SogouBar = () => (
  <div className="absolute left-[1582px] top-[877px] w-[146px] h-[30px] flex items-center">
    <div className="w-[146px] h-[24px] ml-[20px] shrink-0 bg-white border border-[#bcd3e6] flex items-center text-[#1f6fc0] pl-[12px]">
      <span className="text-[17px] font-bold leading-none">英</span>
      <span className="ml-[10px] text-[14px] font-bold leading-none">•,</span>
      <svg className="ml-[15px] shrink-0" width="16" height="16" viewBox="0 0 16 16"><circle cx="8" cy="8" r="8" fill="#1f6fc0" /><circle cx="5.5" cy="6" r="1.3" fill="#fff" /><circle cx="10.5" cy="6" r="1.3" fill="#fff" /><path d="M4 9.5q4 4 8 0z" fill="#fff" /></svg>
      <Mic className="ml-[8px] w-[16px] h-[16px] shrink-0" strokeWidth={2.4} />
      <svg className="ml-[8px] shrink-0" width="18" height="12" viewBox="0 0 18 12" fill="none" stroke="#1f6fc0"><rect x="1" y="1" width="16" height="10" rx="1.5" strokeWidth="1.6" /><path d="M3.5 4h11M3.5 6.5h11M5 9h8" strokeDasharray="1.5 1" /></svg>
    </div>
    <div className="absolute left-0 top-0 w-[29px] h-[27px] rounded-[4px] bg-[#e8622a] -rotate-12 flex items-center justify-center text-white font-bold text-[22px] font-['Liberation_Sans',sans-serif]">S</div>
  </div>
);

// ---- status + task bar ----
const StatusBar = () => (
  <div className="h-[24px] flex items-end bg-gradient-to-b from-[#f8f8f8] via-[#e8e8e8] to-[#cfcfcf] border-t border-[#999] text-[12px] text-[#333]">
    <div className="w-[945px] h-full flex items-center whitespace-nowrap">按 Tab 键并单击可选择其他项目; 按 Ctrl 键并单击可将新项目添加到选择集; 按 Shift 键并单击可取消选择。</div>
    <div className="w-[20px] h-full flex items-center justify-center">
      <S w={14} h={18}><path d="M3 6v10h4V6zM9 8v8h4V8z" stroke="#2f7ba8" /><circle cx="6" cy="4" r="3" fill="#3aa65a" stroke="none" /></S>
    </div>
    <div className="ml-[2px] w-[205px] h-[20px] bg-white flex items-center justify-end pr-[5px]"><ChevronDown className="w-[13px] h-[13px] text-[#aaa]" /></div>
    <div className="ml-[5px] w-[42px] h-full flex items-center pl-[4px] gap-[2px]">
      <S w={16} h={18}><path d="M1 16l5-8 9-6v5l-8 5-2 4z" fill="#aaa" stroke="#888" /></S>:0
    </div>
    <div className="ml-[15px] w-[22px] h-full flex items-center justify-center"><S w={16} h={18}><rect x="1" y="1" width="14" height="16" /><path d="M1 4h14M3 7h3M8 7h5M3 10h3M8 10h5M3 13h3M8 13h5" /></S></div>
    <div className="ml-[3px] w-[16px] h-full flex items-center justify-center"><span className="w-[14px] h-[17px] bg-[#8a8a8a]" /></div>
    <div className="ml-[6px] w-[155px] h-[20px] bg-white flex items-center justify-between pl-[2px] pr-[4px] text-[#888]">主模型<ChevronDown className="w-[13px] h-[13px] text-[#aaa]" /></div>
    <div className="ml-[165px] flex items-center h-full gap-[6px] text-[#444]">
      <span className="w-[20px] h-full bg-[#dcdcdc] flex items-center justify-center"><S w={18} h={20}><path d="M2 5q4-4 7 0t7 0" stroke="#c99a10" strokeWidth="2" /><path d="M8 7v11l3-3 3 4" stroke="#555" /></S></span>
      <span className="w-[20px] h-full bg-[#dcdcdc] flex items-center justify-center"><S w={18} h={20}><path d="M1 15l8-9v9z" stroke="#2f7ba8" /><path d="M10 1l6 6m0-6l-6 6" stroke="#c9342c" strokeWidth="2" /><path d="M10 9v9l3-3 2 3" stroke="#555" /></S></span>
      <span className="w-[20px] h-full bg-[#dcdcdc] flex items-center justify-center"><S w={18} h={20}><rect x="3" y="2" width="7" height="4" fill="#e3a14c" /><rect x="3" y="6" width="7" height="4" fill="#e3a14c" /><path d="M10 9v9l3-3 2 3" stroke="#555" /></S></span>
      <span className="w-[20px] h-full bg-[#dcdcdc] flex items-center justify-center"><S w={18} h={20}><path d="M2 5l6-2v13l-6-2z" stroke="#2f7ba8" /><path d="M10 1l5 5m0-5l-5 5" stroke="#c9342c" strokeWidth="2" /><path d="M10 9v9l3-3 2 3" stroke="#555" /></S></span>
      <span className="w-[20px] h-full bg-[#dcdcdc] flex items-center justify-center"><S w={18} h={20}><path d="M5 2v8M1 6h8" /><path d="M8 8v10l3-3 3 4" /></S></span>
    </div>
  </div>
);

const TaskBar = () => (
  <div className="h-[40px] flex items-center bg-gradient-to-r from-[#20343f] to-[#1c2a40] relative text-white">
    <div className="w-[51px] flex justify-center">
      <svg width="24" height="24" viewBox="0 0 24 24"><circle cx="12" cy="12" r="11" fill="#e0483a" /><path d="M12 12L3 5a11 11 0 0 0 6 18z" fill="#3aa65a" /><path d="M12 12l9-6a11 11 0 0 1-8 17z" fill="#f4c430" /><circle cx="12" cy="12" r="5" fill="#4a8fe0" stroke="#fff" strokeWidth="1.6" /></svg>
    </div>
    <div className="w-[50px] flex justify-center">
      <svg width="24" height="22" viewBox="0 0 24 22"><path d="M1 3h9l2 3h11v14H1z" fill="#f3ca5e" /><rect x="1" y="11" width="22" height="9" fill="#f8dd88" /><rect x="8" y="14" width="8" height="6" fill="#3a93c9" /></svg>
    </div>
    <div className="w-[48px] h-[40px] bg-[#4a5b68] flex items-center justify-center">
      <svg width="24" height="26" viewBox="0 0 24 26"><rect width="24" height="26" fill="#b8cde8" /><path d="M0 26L12 2l5 12 7-2v14z" fill="#2c5fb0" /><path d="M8 26l4-10 5 10z" fill="#0e2f70" /></svg>
    </div>
    <div className="w-[50px] flex justify-center">
      <svg width="26" height="22" viewBox="0 0 26 22"><path d="M1 2h7l3 10 2-6h2l-2 14H9zM17 2h8l-4 18h-5z" fill="#e2452f" /></svg>
    </div>
    <div className="w-[48px] flex justify-center text-[36px] leading-none font-bold text-[#0a74d0] font-['Liberation_Sans',sans-serif] -mt-[6px]">e</div>
    {/* active-window underlines */}
    <div className="absolute bottom-0 left-[56px] w-[40px] h-[2px] bg-[#7cb4dc]" />
    <div className="absolute bottom-0 left-[101px] w-[48px] h-[2px] bg-[#7cb4dc]" />
    <div className="absolute bottom-0 left-[154px] w-[40px] h-[2px] bg-[#7cb4dc]" />
    <div className="absolute bottom-0 left-[203px] w-[40px] h-[2px] bg-[#7cb4dc]" />

    <div className="ml-auto flex items-center">
      <span className="w-[16px] h-[22px] rounded-[3px] bg-[#d9532a] flex items-center justify-center text-[15px] font-bold font-['Liberation_Sans',sans-serif]">S</span>
      <ChevronUp className="ml-[30px] w-[16px] h-[16px] text-[#ddd]" strokeWidth={1.4} />
      <Mic className="ml-[5px] w-[18px] h-[24px] text-[#eee]" strokeWidth={2} />
      <span className="ml-[5px] w-[16px] h-[24px] rounded-[2px] bg-[#3a4a80] flex items-center justify-center text-[13px] italic font-bold leading-none pt-[4px]">"</span>
      <ShieldCheck className="ml-[8px] w-[18px] h-[20px] text-[#58b5f5]" strokeWidth={2.2} />
      <Volume1 className="ml-[7px] w-[16px] h-[16px] text-[#ddd]" strokeWidth={1.4} />
      <Wifi className="ml-[9px] w-[16px] h-[16px] text-[#ccc]" strokeWidth={1.4} />
      <div className="ml-[10px] w-[23px] overflow-hidden text-[13px] leading-[20px] whitespace-nowrap text-[#eee]">
        <div className="pl-[15px]">16:45</div>
        <div>2021/1/5</div>
      </div>
    </div>
  </div>
);

export default function App() {
  return (
    <div className="w-[1728px] h-[1080px] overflow-hidden flex flex-col bg-white font-['Noto_Sans','Noto_Sans_CJK_SC',sans-serif]">
      {/* title row */}
      <div className="h-[24px] flex items-center bg-white relative">
        <QuickBar />
        <div className="ml-[264px] text-[12px] text-[#333] whitespace-nowrap">Autodesk Revit 2016 -</div>
        <div className="ml-[26px] text-[13.5px] text-[#333] whitespace-nowrap">项目1 - 三维视图: {'{'}三维{'}'}</div>
        <SearchBar />
        <span className="absolute left-[1702px] top-[11px] w-[10px] h-[1.5px] bg-[#333]" />
      </div>

      {/* tabs */}
      <div className="h-[21px] bg-[#9b9b9b] flex items-end pl-[2px] gap-[20.4px] text-[12px] text-[#444] whitespace-nowrap">
        {tabs.map(t => <span key={t} className="h-[21px] leading-[21px]">{t}</span>)}
        <span className="-ml-[11px] h-[21px] px-[6px] leading-[20px] text-[12.5px] bg-gradient-to-b from-[#e4f2da] to-[#c6e6b0] border-x-2 border-t-2 border-[#9ad07c]">修改 | 地形</span>
        <span className="ml-[8px] self-center flex items-center gap-[3px]">
          <span className="w-[15px] h-[9px] rounded-[2px] bg-white border border-[#444] flex items-center justify-center"><span className="w-0 h-0 border-x-[3px] border-x-transparent border-b-[3px] border-b-[#444]" /></span>
          <Caret />
        </span>
      </div>

      <Ribbon />

      {/* options bar */}
      <div className="h-[26px] bg-[#d6e4cc] border-b-2 border-[#6e6e6e]" />

      {/* main work area */}
      <div className="flex-1 flex min-h-0 bg-white">
        <PropsPanel />
        <div className="w-[4px] shrink-0 bg-white" />
        <div className="w-[1354px] shrink-0 flex flex-col border-l-2 border-[#666]">
          <div className="flex-1 flex min-h-0">
            <div className="flex-1 relative overflow-hidden bg-white">
              <Model />
              <div className="absolute left-[1285px] top-[9px] flex items-center gap-[7px]">
                <span className="w-[11px] h-[5px] border border-[#333] bg-[#ccc]" />
                <span className="w-[11px] h-[11px] border border-[#333] flex items-center justify-center"><span className="w-[4px] h-[5px] border border-[#333]" /></span>
                <X className="ml-[1px] w-[13px] h-[13px] text-[#444]" strokeWidth={2} />
              </div>
              <ViewCube />
              <NavBar />
            </div>
            <div className="w-[17px] shrink-0 bg-[#f0f0f0] flex flex-col items-center justify-between py-[3px] relative">
              <ChevronUp className="w-[13px] h-[13px] text-[#444]" strokeWidth={3} />
              <div className="absolute top-[407px] w-[15px] h-[18px] bg-[#cdcdcd]" />
              <ChevronDown className="w-[13px] h-[13px] text-[#444]" strokeWidth={3} />
            </div>
          </div>
          <ViewBar />
        </div>
        <ProjectBrowser />
      </div>

      <StatusBar />
      <TaskBar />
      <SogouBar />
    </div>
  );
}
